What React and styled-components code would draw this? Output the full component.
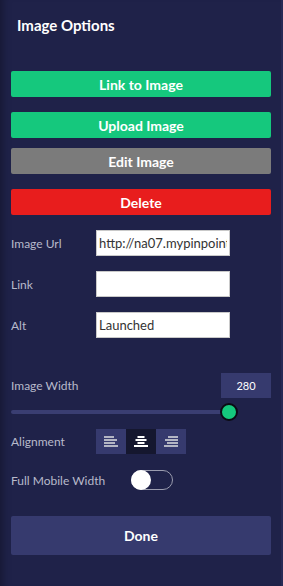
import React, { useState } from 'react';
import styled, { createGlobalStyle } from 'styled-components';

const GlobalStyle = createGlobalStyle`
  html, body {
    margin: 0;
    padding: 0;
    background: #1f2249;
  }
  * {
    box-sizing: border-box;
  }
`;

const Panel = styled.div`
  width: 283px;
  height: 586px;
  background: #1f2249;
  box-shadow: inset 10px 0 10px -8px rgba(0, 0, 0, 0.35);
  border-right: 2px solid #262a55;
  font-family: Lato, 'Open Sans', sans-serif;
  padding: 0 10px 0 11px;
  display: flex;
  flex-direction: column;
`;

const Title = styled.h1`
  margin: 15px 0 0 6px;
  height: 20px;
  font-size: 15px;
  line-height: 20px;
  font-weight: 700;
  color: #ffffff;
`;

const colors = {
  green: '#15c87d',
  gray: '#7b7b7b',
  red: '#e81d1d',
  navy: '#363a6e',
};

const ActionButton = styled.button`
  display: block;
  width: 100%;
  height: ${(p) => p.$height || 26}px;
  margin-top: ${(p) => p.$top}px;
  border: none;
  border-radius: 2px;
  background: ${(p) => colors[p.$color]};
  color: #ffffff;
  font-family: inherit;
  font-size: 14px;
  font-weight: 700;
  cursor: pointer;
  padding: 0;
`;

const FieldRow = styled.div`
  display: flex;
  align-items: center;
  margin-top: ${(p) => p.$top}px;
`;

const Label = styled.label`
  width: ${(p) => p.$width || 85}px;
  flex-shrink: 0;
  white-space: nowrap;
  font-size: 12px;
  color: #b8bacb;
`;

const TextInput = styled.input`
  width: 134px;
  height: 26px;
  border: 1px solid #c9c9c9;
  background: #ffffff;
  font-family: inherit;
  font-size: 13px;
  color: #333333;
  padding: 0 2px;
  outline: none;
`;

const WidthRow = styled.div`
  display: flex;
  align-items: center;
  justify-content: space-between;
  margin-top: 35px;
`;

const NumberBox = styled.div`
  width: 50px;
  height: 25px;
  background: #363a6e;
  color: #ffffff;
  font-size: 11px;
  display: flex;
  align-items: center;
  justify-content: center;
`;

const SliderTrack = styled.div`
  position: relative;
  height: 4px;
  width: 218px;
  margin-top: 12px;
  background: #3a3e72;
  border-radius: 2px;
`;

const SliderThumb = styled.div`
  position: absolute;
  top: 50%;
  width: 18px;
  height: 18px;
  border-radius: 50%;
  background: #15c87d;
  border: 2px solid #0b0b14;
  transform: translate(-50%, -50%);
`;

const AlignGroup = styled.div`
  display: flex;
`;

const AlignButton = styled.button`
  width: 30px;
  height: 25px;
  border: none;
  padding: 0;
  background: ${(p) => (p.$active ? '#15172f' : '#363a6e')};
  display: flex;
  align-items: center;
  justify-content: center;
  cursor: pointer;
`;

const Toggle = styled.div`
  width: 42px;
  height: 20px;
  border: 1px solid #9a9cae;
  border-radius: 10px;
  position: relative;
`;

const Knob = styled.div`
  position: absolute;
  left: -1px;
  top: -1px;
  width: 20px;
  height: 20px;
  border-radius: 50%;
  background: #ffffff;
`;

const lines = {
  left: [
    [0, 10],
    [0, 13],
    [0, 11],
    [0, 14],
  ],
  center: [
    [3.5, 7],
    [1.5, 11],
    [3.5, 7],
    [0, 14],
  ],
  right: [
    [4, 10],
    [1, 13],
    [3, 11],
    [0, 14],
  ],
};

const AlignIcon = ({ type, color }) => (
  <svg width="14" height="11" viewBox="0 0 14 11">
    {lines[type].map(([x, w], i) => (
      <rect key={i} x={x} y={i * 3} width={w} height="2" fill={color} />
    ))}
  </svg>
);

const App = () => {
  const [align, setAlign] = useState('center');
  const width = 280;

  return (
    <>
      <GlobalStyle />
      <Panel>
        <Title>Image Options</Title>

        <ActionButton $color="green" $top={36}>Link to Image</ActionButton>
        <ActionButton $color="green" $top={15}>Upload Image</ActionButton>
        <ActionButton $color="gray" $top={10}>Edit Image</ActionButton>
        <ActionButton $color="red" $top={15}>Delete</ActionButton>

        <FieldRow $top={15}>
          <Label>Image Url</Label>
          <TextInput defaultValue="http://na07.mypinpoint.com/images/launched.png" />
        </FieldRow>
        <FieldRow $top={15}>
          <Label>Link</Label>
          <TextInput defaultValue="" />
        </FieldRow>
        <FieldRow $top={15}>
          <Label>Alt</Label>
          <TextInput defaultValue="Launched" />
        </FieldRow>

        <WidthRow>
          <Label>Image Width</Label>
          <NumberBox>{width}</NumberBox>
        </WidthRow>
        <SliderTrack>
          <SliderThumb style={{ left: `${(width / 280) * 100}%` }} />
        </SliderTrack>

        <FieldRow $top={15}>
          <Label>Alignment</Label>
          <AlignGroup>
            {['left', 'center', 'right'].map((t) => (
              <AlignButton key={t} $active={align === t} onClick={() => setAlign(t)}>
                <AlignIcon type={t} color={align === t ? '#ffffff' : '#b4b6c4'} />
              </AlignButton>
            ))}
          </AlignGroup>
        </FieldRow>

        <FieldRow $top={16}>
          <Label $width={120}>Full Mobile Width</Label>
          <Toggle>
            <Knob />
          </Toggle>
        </FieldRow>

        <ActionButton $color="navy" $height={39} $top={26}>Done</ActionButton>
      </Panel>
    </>
  );
};

export default App;
